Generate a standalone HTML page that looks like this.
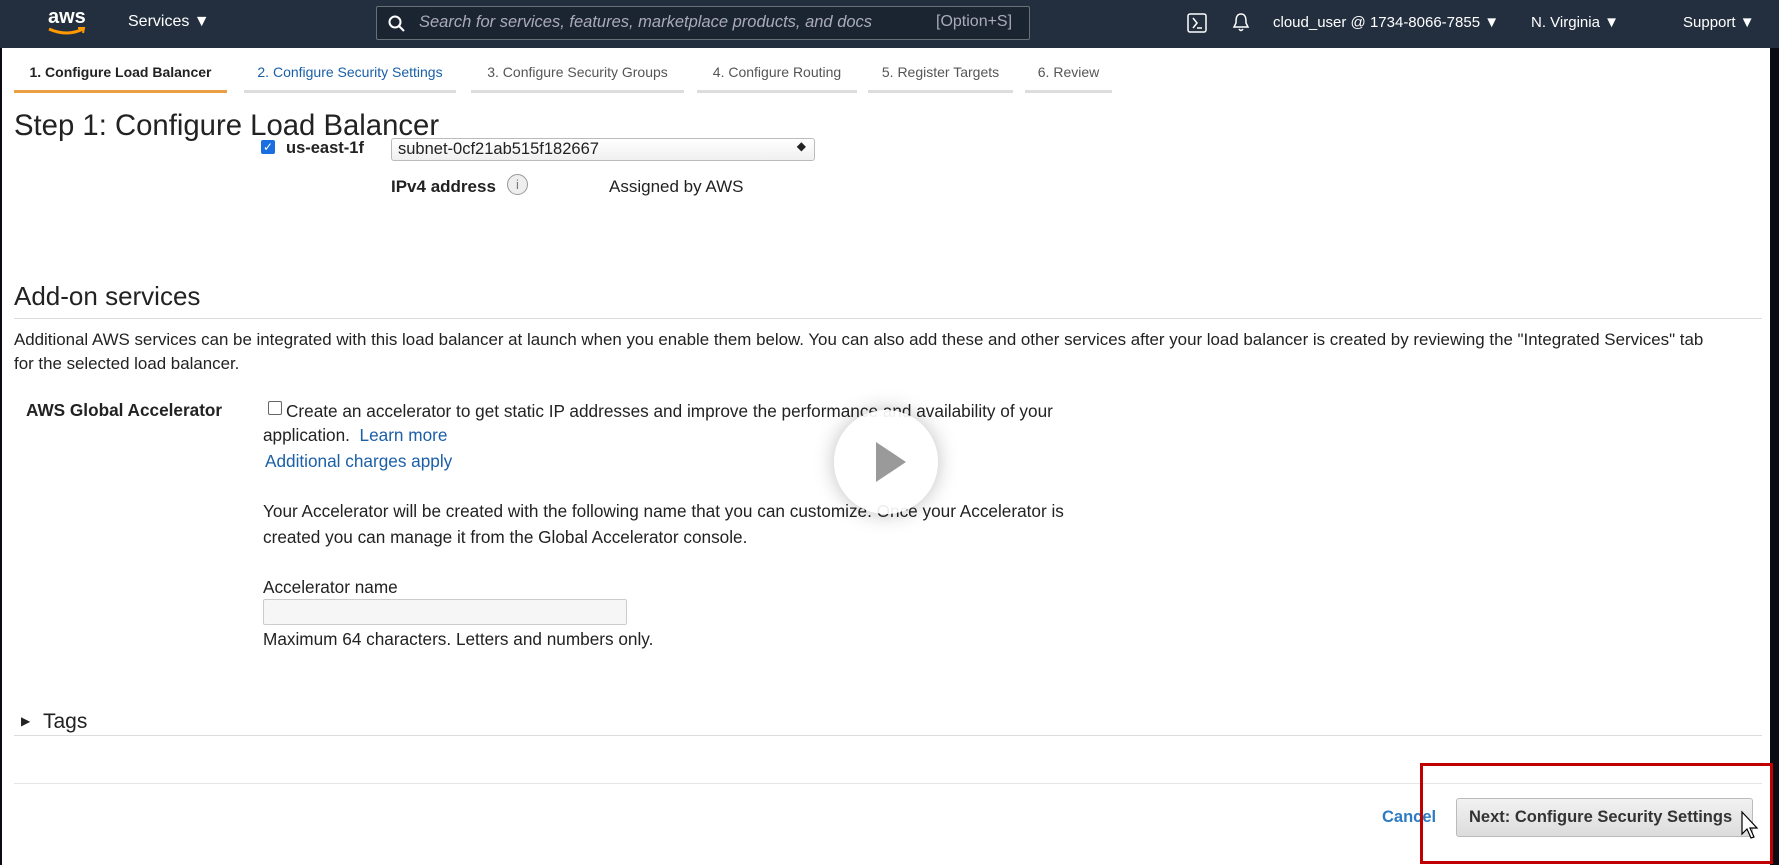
<!DOCTYPE html>
<html><head><meta charset="utf-8"><style>
*{margin:0;padding:0;box-sizing:border-box}
body{width:1779px;height:865px;overflow:hidden;background:#0b0b14;font-family:"Liberation Sans",sans-serif;position:relative}
.pg{position:absolute;left:2px;top:0;width:1768px;height:865px;background:#fff}
.a{position:absolute;white-space:nowrap}
.nav{position:absolute;left:0;top:0;width:1779px;height:48px;background:#232f3e}
.nt{color:#fff;font-size:16px}
.tab{position:absolute;top:64px;font-size:14px;color:#555;padding-bottom:10px;border-bottom:3px solid #ddd;text-align:center}
.p{font-size:17.2px;color:#222}
a{color:#1a5fa8;text-decoration:none}
</style></head><body>
<div class="pg"></div>
<div class="nav">
 <div class="a nt" style="left:48px;top:6px;font-size:20px;font-weight:bold">aws</div>
 <svg class="a" style="left:47px;top:27px" width="40" height="10"><path d="M2 2 Q20 10 36 2" stroke="#f90" stroke-width="3" fill="none"/><path d="M31 1 L37 1 L36 6" stroke="#f90" stroke-width="2" fill="none"/></svg>
 <div class="a nt" style="left:128px;top:13px">Services ▼</div>
 <div class="a" style="left:376px;top:6px;width:654px;height:34px;background:#1b2531;border:1px solid #687078;border-radius:2px"></div>
 <svg class="a" style="left:388px;top:15px" width="18" height="18"><circle cx="7" cy="7" r="5.5" stroke="#fff" stroke-width="2" fill="none"/><path d="M11 11 L16 16" stroke="#fff" stroke-width="2"/></svg>
 <div class="a" style="left:419px;top:13px;color:#aab;font-style:italic;font-size:16.5px">Search for services, features, marketplace products, and docs</div>
 <div class="a" style="left:936px;top:13px;color:#aab;font-size:16px">[Option+S]</div>
 <svg class="a" style="left:1187px;top:13px" width="20" height="20"><rect x="1" y="1" width="18" height="18" rx="2" stroke="#fff" stroke-width="1.5" fill="none"/><path d="M6 5 L10 10 L6 15 M10 15 L15 15" stroke="#fff" stroke-width="1.5" fill="none"/></svg>
 <svg class="a" style="left:1232px;top:12px" width="18" height="22"><path d="M9 2 C4 2 4 7 4 11 L2 15 L16 15 L14 11 C14 7 14 2 9 2 Z M7 17 Q9 20 11 17" stroke="#fff" stroke-width="1.5" fill="none"/></svg>
 <div class="a nt" style="left:1273px;top:14px;font-size:15px">cloud_user @ 1734-8066-7855 ▼</div>
 <div class="a nt" style="left:1531px;top:14px;font-size:15px">N. Virginia ▼</div>
 <div class="a nt" style="left:1683px;top:14px;font-size:15px">Support ▼</div>
</div>
<div class="tab" style="left:14px;width:213px;color:#222;border-color:#ec9e45;font-weight:bold">1. Configure Load Balancer</div>
<div class="tab" style="left:244px;width:212px;color:#1a5fa8">2. Configure Security Settings</div>
<div class="tab" style="left:471px;width:213px">3. Configure Security Groups</div>
<div class="tab" style="left:697px;width:160px">4. Configure Routing</div>
<div class="tab" style="left:868px;width:145px">5. Register Targets</div>
<div class="tab" style="left:1025px;width:87px">6. Review</div>
<div class="a" style="left:14px;top:109px;font-size:29.3px;color:#222">Step 1: Configure Load Balancer</div>
<div class="a" style="left:261px;top:140px;width:14px;height:14px;background:#1a6fe0;border-radius:2px;color:#fff;font-size:12px;line-height:14px;text-align:center">✓</div>
<div class="a" style="left:286px;top:139px;font-size:16.5px;font-weight:bold;color:#222">us-east-1f</div>
<div class="a" style="left:391px;top:138px;width:424px;height:23px;border:1px solid #bbb;border-radius:3px;background:linear-gradient(#fff,#f0f0f0);font-size:16.5px;color:#222;padding:1px 6px">subnet-0cf21ab515f182667<span style="position:absolute;right:8px;top:0;font-size:12px">◆</span></div>
<div class="a" style="left:391px;top:177px;font-size:17px;font-weight:bold;color:#222">IPv4 address</div>
<div class="a" style="left:507px;top:174px;width:21px;height:21px;border:1.5px solid #999;border-radius:50%;background:#eee;color:#777;font-size:13px;text-align:center;line-height:19px">i</div>
<div class="a" style="left:609px;top:177px;font-size:17px;color:#222">Assigned by AWS</div>
<div class="a" style="left:14px;top:281px;font-size:26px;color:#222">Add-on services</div>
<div class="a" style="left:14px;top:318px;width:1748px;height:1px;background:#ddd"></div>
<div class="a" style="left:14px;top:328px;line-height:24px;font-size:16.9px;color:#222">Additional AWS services can be integrated with this load balancer at launch when you enable them below. You can also add these and other services after your load balancer is created by reviewing the "Integrated Services" tab<br>for the selected load balancer.</div>
<div class="a p" style="left:26px;top:400px;font-weight:bold">AWS Global Accelerator</div>
<div class="a" style="left:268px;top:401px;width:14px;height:14px;border:1px solid #666;border-radius:2px;background:#fff"></div>
<div class="a p" style="left:286px;top:398px;line-height:26px">Create an accelerator to get static IP addresses and improve the performance and availability of your</div>
<div class="a p" style="left:263px;top:425px">application.&nbsp; <a>Learn more</a></div>
<div class="a p" style="left:265px;top:451px"><a>Additional charges apply</a></div>
<div class="a p" style="left:263px;top:498px;line-height:26px">Your Accelerator will be created with the following name that you can customize. Once your Accelerator is<br>created you can manage it from the Global Accelerator console.</div>
<div class="a p" style="left:263px;top:577px">Accelerator name</div>
<div class="a" style="left:263px;top:599px;width:364px;height:26px;border:1px solid #ccc;border-radius:2px;background:#f6f6f6"></div>
<div class="a p" style="left:263px;top:629px">Maximum 64 characters. Letters and numbers only.</div>
<div class="a" style="left:21px;top:714px;font-size:12px;color:#222">▶</div>
<div class="a" style="left:43px;top:710px;font-size:21px;color:#222">Tags</div>
<div class="a" style="left:14px;top:735px;width:1748px;height:1px;background:#ddd"></div>
<div class="a" style="left:14px;top:783px;width:1748px;height:1px;background:#e6e6e6"></div>
<div class="a" style="left:1382px;top:808px;font-size:16.5px;font-weight:bold;color:#2d7bc4">Cancel</div>
<div class="a" style="left:1456px;top:798px;width:297px;height:39px;border:1px solid #bbb;border-radius:3px;background:linear-gradient(#f2f2f2,#dcdcdc);font-size:16.5px;font-weight:bold;color:#333;line-height:37px;padding-left:12px">Next: Configure Security Settings</div>
<div class="a" style="left:1420px;top:763px;width:353px;height:101px;border:3px solid #c00000"></div>
<svg class="a" style="left:1740px;top:810px" width="30" height="42"><path d="M2 2 L2 24 L7 19 L11 28 L14 27 L10 18 L17 18 Z" fill="#fff" stroke="#000" stroke-width="1.2"/></svg>
<div class="a" style="left:834px;top:410px;width:104px;height:104px;border-radius:50%;background:rgba(255,255,255,0.92);box-shadow:0 0 20px rgba(0,0,0,0.25)"></div>
<svg class="a" style="left:834px;top:410px" width="104" height="104"><path d="M42 32 L42 72 L72 52 Z" fill="#9a9a9a"/></svg>
</body></html>
